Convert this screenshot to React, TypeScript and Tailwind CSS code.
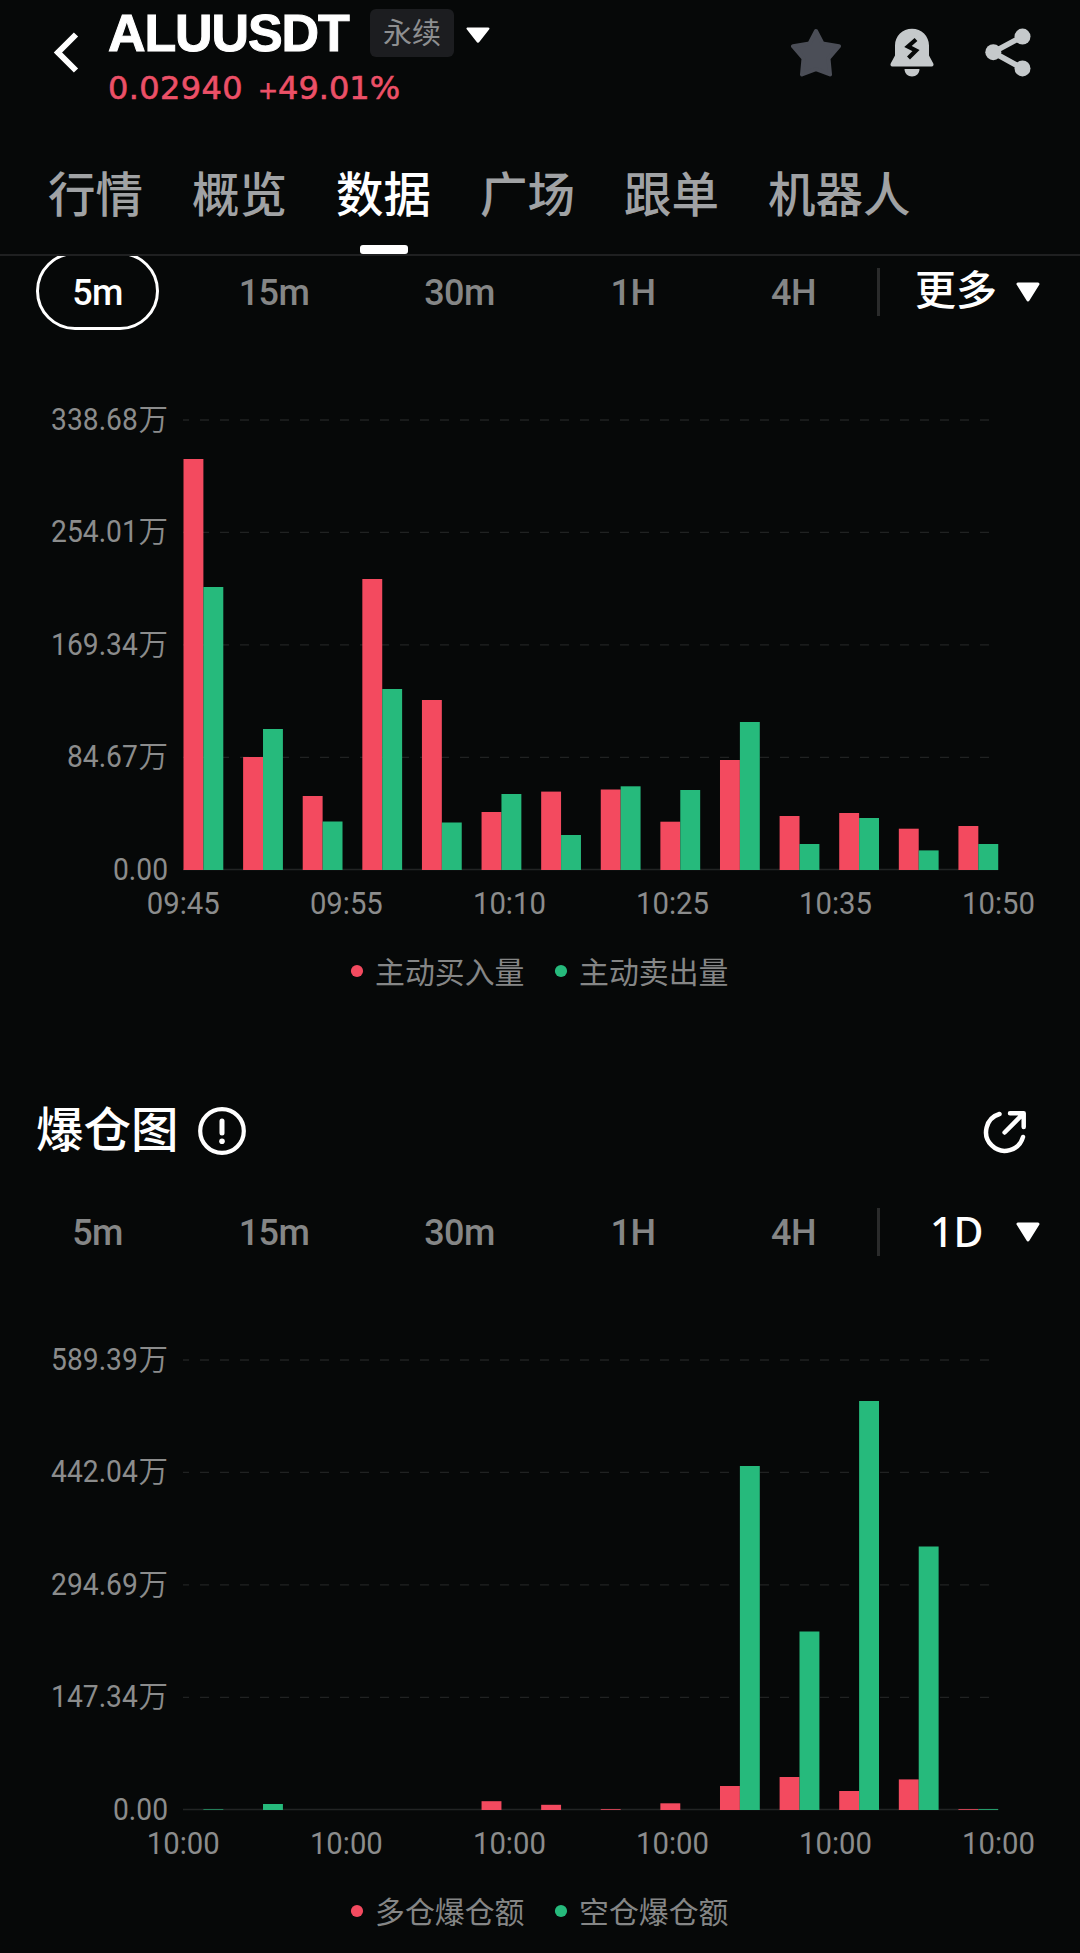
const RED = '#f34a5f'
const GREEN = '#26ba7c'

const TABS = ['行情', '概览', '数据', '广场', '跟单', '机器人']
const PERIODS = ['5m', '15m', '30m', '1H', '4H']

type Series = { label: string; color: string; heights: number[] }
type ChartData = {
  yLabels: string[]
  xLabels: string[]
  series: [Series, Series]
}

const volume: ChartData = {
  yLabels: ['338.68', '254.01', '169.34', '84.67', '0.00'],
  xLabels: ['09:45', '09:55', '10:10', '10:25', '10:35', '10:50'],
  series: [
    {
      label: '主动买入量',
      color: RED,
      heights: [411, 113, 74, 291, 170, 58, 78.4, 80.5, 48.3, 110, 54, 57, 41.3, 44],
    },
    {
      label: '主动卖出量',
      color: GREEN,
      heights: [283, 141, 48.5, 181, 47.5, 76, 35, 83.7, 80, 148, 26, 52, 19.6, 26],
    },
  ],
}

const liquidation: ChartData = {
  yLabels: ['589.39', '442.04', '294.69', '147.34', '0.00'],
  xLabels: ['10:00', '10:00', '10:00', '10:00', '10:00', '10:00'],
  series: [
    {
      label: '多仓爆仓额',
      color: RED,
      heights: [0, 0, 0, 0, 0, 8.8, 5.2, 0.8, 6.7, 24, 33, 19, 30.6, 0.8],
    },
    {
      label: '空仓爆仓额',
      color: GREEN,
      heights: [0.6, 6, 0, 0, 0, 0, 0, 0, 0, 344, 178.5, 409, 263.5, 0.8],
    },
  ],
}

const BASE = 540
const GRID = [90, 202.4, 314.9, 427.4]

function BarChart({ data }: { data: ChartData }) {
  return (
    <svg width="1080" height="680" viewBox="0 0 1080 680" className="block">
      {GRID.map((y) => (
        <line key={y} x1="183" x2="990" y1={y} y2={y} stroke="#202222" strokeWidth="1.4" strokeDasharray="9 11" strokeDashoffset="3" />
      ))}
      <line x1="183" x2="998" y1={BASE - 0.5} y2={BASE - 0.5} stroke="#222424" strokeWidth="1.6" />
      {data.series.map((s, k) =>
        s.heights.map((h, i) => (
          <rect key={`${k}-${i}`} x={183.5 + i * 59.61 + k * 19.9} y={BASE - h} width="19.9" height={h} fill={s.color} />
        )),
      )}
      <g fill="#8b8c8c" fontSize="31" fontFamily='Roboto, "Noto Sans CJK SC", sans-serif'>
        {data.yLabels.map((t, i) => {
          const y = i < 4 ? GRID[i] + 10 : BASE + 10
          const end = i < 4 ? 137.8 : 168
          return (
            <g key={t}>
              <text textAnchor="end" transform={`translate(${end} ${y}) scale(0.91 1)`}>
                {t}
              </text>
              {i < 4 && (
                <text x="138.6" y={y} fontSize="29.500" fontWeight="350" fontFamily='"Noto Sans CJK SC", sans-serif'>
                  万
                </text>
              )}
            </g>
          )
        })}
        {data.xLabels.map((t, i) => (
          <text key={i} textAnchor="middle" transform={`translate(${183.3 + i * 163.05} 584) scale(0.945 1)`}>
            {t}
          </text>
        ))}
      </g>
      {data.series.map((s, k) => (
        <g key={s.label}>
          <circle cx={357 + k * 204} cy="641" r="6.1" fill={s.color} />
          <text x={375 + k * 204} y="653" fontSize="29.900" fontWeight="400" fill="#858686" fontFamily='"Noto Sans CJK SC", sans-serif'>
            {s.label}
          </text>
        </g>
      ))}
    </svg>
  )
}

function Caret({ className }: { className: string }) {
  return (
    <svg viewBox="0 0 24 20" preserveAspectRatio="none" className={className} fill="#fff" stroke="#fff" strokeWidth="3" strokeLinejoin="round">
      <path d="M2 2H22L12 18Z" />
    </svg>
  )
}

function PeriodRow({ active, more }: { active?: string; more: string }) {
  return (
    <div className="grid h-[74px] grid-cols-[123px_230px_141px_206px_115px_auto] grid-rows-[74px] items-end overflow-hidden pl-9">
      {PERIODS.map((p) => (
        <div
          key={p}
          className={
            p === active
              ? 'flex h-[78px] items-center justify-center rounded-full border-3 border-white pt-1 text-[36px] font-medium text-white'
              : 'flex h-[78px] items-center justify-center pt-1 text-[36px] font-medium text-[#858686]'
          }
        >
          <span className="-tracking-[0.6px]">{p}</span>
        </div>
      ))}
      <div className="flex h-[78px] items-center pl-[26px] pt-px">
        <span className="h-12 w-[3px] bg-[#2a2b2b]" />
        <span
          className={
            more === '1D'
              ? 'ml-[50px] w-[86px] font-["Noto_Sans"] text-[41px] leading-none font-medium text-white'
              : 'ml-[35px] w-[101px] text-[41px] leading-none font-medium text-white'
          }
        >
          {more}
        </span>
        <Caret className="h-5 w-6" />
      </div>
    </div>
  )
}

function Header() {
  return (
    <header className="flex h-[135px] pl-[52px]">
      <svg width="28" height="44" viewBox="0 0 28 44" className="mt-[30px] shrink-0" fill="none" stroke="#fff" strokeWidth="6">
        <path d="M24 4.5L6 22.5L24 40.5" />
      </svg>
      <div className="ml-[28px] w-[683px]">
        <div className="flex h-[66px] items-center">
          <h1 className='w-[262px] font-["Liberation_Sans"] text-[52px] leading-none font-bold tracking-[-1.1px] whitespace-nowrap text-white [-webkit-text-stroke:1px_#fff]'>ALUUSDT</h1>
          <span className="flex h-12 w-[84px] items-center justify-center rounded-[6px] bg-[#1c1d20] pt-0.5 text-[29px] leading-none font-normal text-[#8e8f91]">
            永续
          </span>
          <Caret className="mt-[3px] ml-3 h-4 w-6" />
        </div>
        <div className='flex items-baseline font-["DejaVu_Sans"] text-[32px] leading-[44px] whitespace-nowrap text-[#ec5067] [-webkit-text-stroke:0.6px_#ec5067]'>
          <span className="w-[150px] tracking-[0.4px]">0.02940</span>
          <span className="text-[24px]">+</span>
          <span>49.01%</span>
        </div>
      </div>
      <svg width="50" height="50" viewBox="0 0 50 50" className="mt-7 shrink-0" fill="#4b4e57" stroke="#4b4e57" strokeWidth="4" strokeLinejoin="round">
        <path d="M25 3L31.5 15.5L48 18.2L37.5 30.5L39 46.5L25 41.2L11 46.5L12.500 30.500L2 18.200L18.500 15.500Z" />
      </svg>
      <svg width="44" height="50" viewBox="0 0 44 50" className="ml-[49px] mt-7 shrink-0" fill="#c5c9cb">
        <path d="M22 .7C12.500.7 5 8 5 17.500V27.500L.7 35.500C0 37 .8 38.500 2.300 38.500H41.700C43.200 38.500 44 37 43.300 35.500L39 27.500V17.500C39 8 31.500.7 22 .7Z" />
        <path d="M14.500 41H29.500C29.500 45.500 26.200 48.500 22 48.500S14.500 45.500 14.500 41Z" />
        <path d="M26 11.500L18 18.500L26 22.500L18.500 30" fill="none" stroke="#060808" strokeWidth="4.200" />
      </svg>
      <svg width="48" height="50" viewBox="0 0 48 50" className="ml-[50px] mt-7 shrink-0" fill="#c5c9cb">
        <path d="M38.500 8.500L9 24.200L38.500 40.500" fill="none" stroke="#c5c9cb" strokeWidth="5.500" />
        <circle cx="38.500" cy="8.600" r="8" />
        <circle cx="9.300" cy="24.200" r="8" />
        <circle cx="38.500" cy="40.400" r="8" />
      </svg>
    </header>
  )
}

export default function App() {
  return (
    <div className='h-[1953px] w-[1080px] overflow-hidden bg-[#060808] font-[Roboto,"Noto_Sans_CJK_SC",sans-serif]'>
      <Header />
      <nav className="flex h-[121px] gap-[49px] border-b-2 border-[#1f2021] pl-12">
        {TABS.map((t) => (
          <div
            key={t}
            className={
              t === '数据'
                ? 'flex flex-col items-center text-[47.5px] font-medium text-white'
                : 'flex flex-col items-center text-[47.5px] font-medium text-[#a0a2a4]'
            }
          >
            <span className="h-[110px] pt-[26px] leading-[70px]">{t}</span>
            {t === '数据' && <span className="h-[9px] w-12 shrink-0 rounded-[3px] bg-white" />}
          </div>
        ))}
      </nav>
      <PeriodRow active="5m" more="更多" />
      <BarChart data={volume} />
      <div className="flex h-[186px] items-start pt-[97px] pl-9">
        <h2 className="w-[144px] text-[47.5px] leading-[48px] font-medium whitespace-nowrap text-white">爆仓图</h2>
        <svg width="48" height="48" viewBox="0 0 48 48" className="ml-[18px]" fill="none" stroke="#fff" strokeLinecap="round">
          <circle cx="24" cy="24" r="21.800" strokeWidth="4.200" />
          <path d="M24 14V26" strokeWidth="5" />
          <circle cx="24" cy="34.200" r="2.800" fill="#fff" stroke="none" />
        </svg>
        <svg width="46" height="46" viewBox="0 0 46 46" className="mt-0.5 ml-[736px]" fill="none" stroke="#fff" strokeWidth="4.500" strokeLinecap="round" strokeLinejoin="round">
          <path d="M17.500 5A18.800 18.800 0 1 0 41 28" />
          <path d="M22.600 23.500L41.500 4.500M28 4.300H41.700V18" />
        </svg>
      </div>
      <PeriodRow more="1D" />
      <BarChart data={liquidation} />
    </div>
  )
}
